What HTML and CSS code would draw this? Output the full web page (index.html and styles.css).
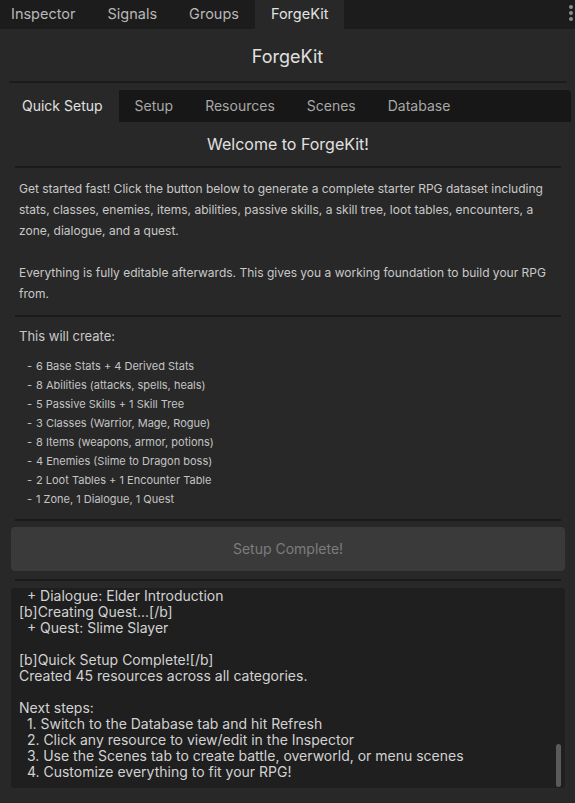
FILE: index.html
```html
<!DOCTYPE html>
<html>
<head>
<meta charset="utf-8">
<link rel="stylesheet" href="styles.css">
</head>
<body>
<div class="topbar">
  <div class="dtab first">Inspector</div>
  <div class="dtab">Signals</div>
  <div class="dtab">Groups</div>
  <div class="dtab active">ForgeKit</div>
  <div class="menu"><span></span><span></span><span></span></div>
</div>
<div class="dock">
  <div class="title">ForgeKit</div>
  <div class="sep sep-top"></div>
  <div class="subtabs">
    <div class="stab active">Quick Setup</div>
    <div class="stab">Setup</div>
    <div class="stab">Resources</div>
    <div class="stab">Scenes</div>
    <div class="stab">Database</div>
  </div>
  <div class="content">
    <div class="welcome">Welcome to ForgeKit!</div>
    <div class="sep"></div>
    <div class="intro">
      <p>Get started fast! Click the button below to generate a complete starter RPG dataset including stats, classes, enemies, items, abilities, passive skills, a skill tree, loot tables, encounters, a zone, dialogue, and a quest.</p>
      <p>Everything is fully editable afterwards. This gives you a working foundation to build your RPG from.</p>
    </div>
    <div class="sep"></div>
    <div class="create-head">This will create:</div>
    <ul class="create-list">
      <li>6 Base Stats + 4 Derived Stats</li>
      <li>8 Abilities (attacks, spells, heals)</li>
      <li>5 Passive Skills + 1 Skill Tree</li>
      <li>3 Classes (Warrior, Mage, Rogue)</li>
      <li>8 Items (weapons, armor, potions)</li>
      <li>4 Enemies (Slime to Dragon boss)</li>
      <li>2 Loot Tables + 1 Encounter Table</li>
      <li>1 Zone, 1 Dialogue, 1 Quest</li>
    </ul>
    <div class="sep sep-list"></div>
  </div>
  <button class="setup-btn" disabled>Setup Complete!</button>
  <div class="sep sep-btn"></div>
  <div class="log">
    <div class="log-lines">
      <div class="ln">  + Dialogue: Elder Introduction</div>
      <div class="ln">[b]Creating Quest...[/b]</div>
      <div class="ln">  + Quest: Slime Slayer</div>
      <div class="ln"></div>
      <div class="ln">[b]Quick Setup Complete![/b]</div>
      <div class="ln">Created 45 resources across all categories.</div>
      <div class="ln"></div>
      <div class="ln">Next steps:</div>
      <div class="ln">  1. Switch to the Database tab and hit Refresh</div>
      <div class="ln">  2. Click any resource to view/edit in the Inspector</div>
      <div class="ln">  3. Use the Scenes tab to create battle, overworld, or menu scenes</div>
      <div class="ln">  4. Customize everything to fit your RPG!</div>
    </div>
    <div class="scrollbar"></div>
  </div>
</div>
</body>
</html>
```

FILE: styles.css
```css
* { box-sizing: border-box; }
html, body {
  margin: 0;
  padding: 0;
  background: #282828;
  font-family: Inter, "Noto Sans", sans-serif;
  color: #cdcdcd;
}
body { width: 575px; height: 803px; overflow: hidden; }

.topbar {
  height: 29px;
  background: #1c1c1c;
  display: flex;
  align-items: stretch;
}
.dtab {
  padding: 0 16px;
  font-size: 14.5px;
  line-height: 28px;
  color: #b8b8b8;
}
.dtab.first { padding-left: 11px; }
.dtab.active {
  background: #282828;
  color: #e2e2e2;
}
.menu {
  margin-left: auto;
  width: 8px;
  display: flex;
  flex-direction: column;
  align-items: center;
  gap: 2px;
  padding-top: 5px;
}
.menu span {
  width: 4px;
  height: 4px;
  border-radius: 50%;
  background: #8c8c8c;
}

.dock { display: flex; flex-direction: column; }

.title {
  margin-top: 16px;
  margin-bottom: 12px;
  text-align: center;
  font-size: 18px;
  line-height: 24px;
  color: #e0e0e0;
}

.sep {
  height: 2px;
  background: #1b1b1b;
}
.sep-top { margin: 0 8px 0 9px; }

.subtabs {
  margin: 7px 4px 0 9px;
  height: 32px;
  background: #171717;
  border-radius: 0 4px 0 0;
  display: flex;
}
.stab {
  padding: 0 16px;
  font-size: 14px;
  line-height: 32px;
  color: #a8a8a8;
}
.stab.active {
  padding-left: 13px;
  background: #282828;
  color: #e0e0e0;
}

.content {
  margin: 0 14px 0 15px;
  display: flex;
  flex-direction: column;
}
.welcome {
  margin-top: 11px;
  margin-bottom: 11px;
  text-align: center;
  font-size: 16px;
  line-height: 22px;
  color: #e0e0e0;
}
.intro {
  padding: 10px 4px 11px 4px;
  font-size: 12px;
  line-height: 21px;
  color: #c8c8c8;
}
.intro p { margin: 0; }
.intro p + p { margin-top: 21px; }

.create-head {
  margin-top: 10px;
  padding-left: 4px;
  font-size: 13px;
  line-height: 19px;
  color: #c8c8c8;
}
.create-list {
  list-style: none;
  margin: 11px 0 10px 0;
  padding: 0 0 0 12px;
  font-size: 11px;
  line-height: 19px;
  color: #c4c4c4;
}
.create-list li::before {
  content: "-";
  display: inline-block;
  width: 9px;
}

.setup-btn {
  margin: 6px 10px 0 11px;
  height: 44px;
  border: none;
  border-radius: 4px;
  background: #3a3a3a;
  color: #7c7c7c;
  font-family: inherit;
  font-size: 14px;
  padding: 0 0 2px 0;
}
.sep-btn { margin: 8px 14px 0 15px; }

.log {
  position: relative;
  margin: 7px 10px 0 11px;
  height: 200px;
  background: #1f1f1f;
  border-radius: 4px;
  overflow: hidden;
  display: flex;
  flex-direction: column;
  justify-content: flex-end;
  padding: 0 0 8px 8px;
}
.log-lines {
  font-size: 14px;
  line-height: 16px;
  color: #d2d2d2;
}
.ln { height: 16px; white-space: pre; }
.scrollbar {
  position: absolute;
  right: 4px;
  bottom: 1px;
  width: 5px;
  height: 43px;
  border-radius: 3px;
  background: #5a5a5a;
}
```
